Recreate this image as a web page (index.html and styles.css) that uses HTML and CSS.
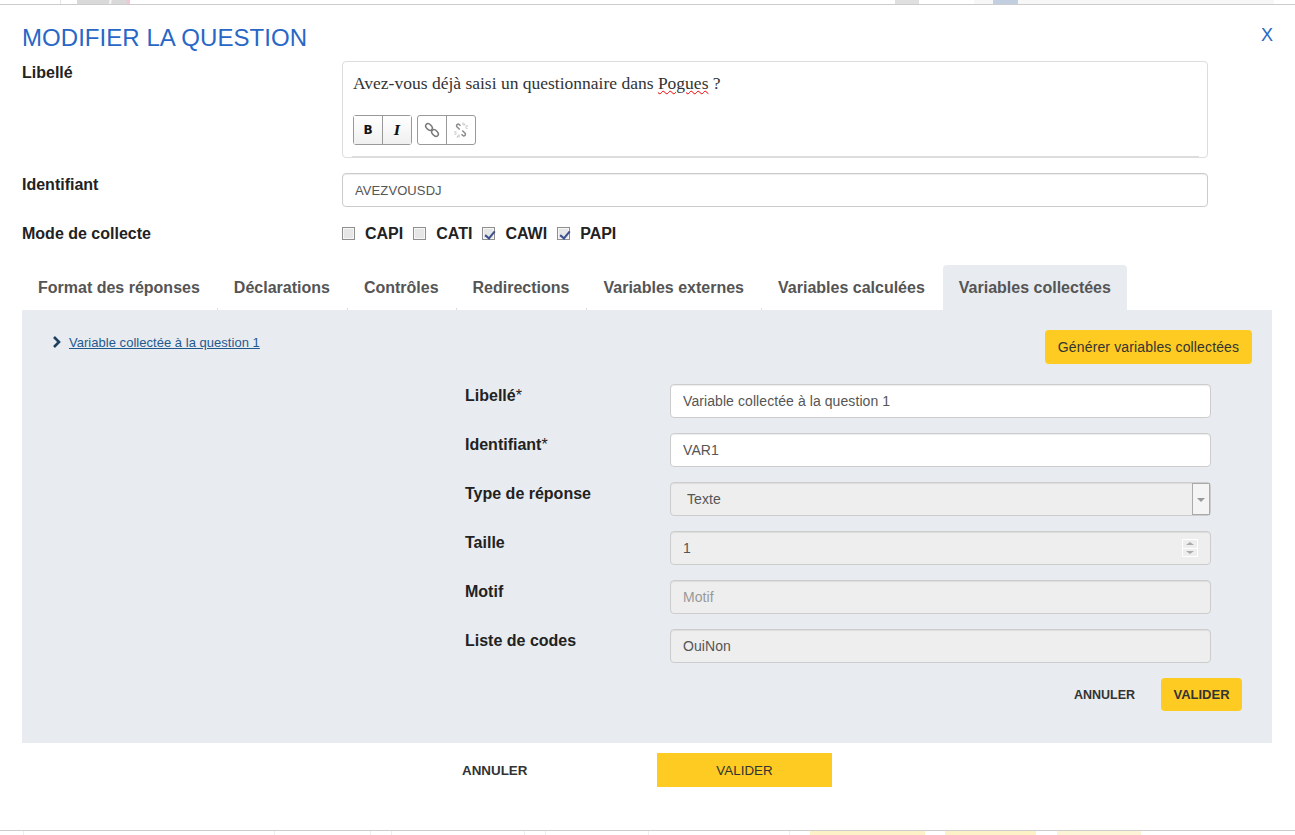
FILE: index.html
```html
<!DOCTYPE html>
<html lang="fr">
<head>
<meta charset="utf-8">
<title>Modifier la question</title>
<link rel="stylesheet" href="styles.css">
</head>
<body>
<div class="backdrop-top">
  <span class="bt-a"></span><span class="bt-b"></span><span class="bt-c"></span><span class="bt-e"><span class="bt-d"></span></span>
</div>
<main class="modal">
  <header class="modal-head">
    <h1>MODIFIER LA QUESTION</h1>
    <a class="close">X</a>
  </header>
  <div class="row row-label">
    <label class="row-title">Libellé</label>
    <div class="editor">
      <p class="editor-text">Avez-vous déjà saisi un questionnaire dans <span class="spell">Pogues</span> ?</p>
      <div class="toolbar">
        <div class="btn-group">
          <span class="tool tool-b">B</span><span class="tool tool-i">I</span>
        </div>
        <div class="btn-group">
          <span class="tool"><svg width="18" height="18" viewBox="0 0 18 18" fill="none" stroke="#777" stroke-width="1.5"><ellipse cx="6" cy="6" rx="3.800" ry="2.600" transform="rotate(45 6 6)"/><ellipse cx="12" cy="12" rx="3.800" ry="2.600" transform="rotate(45 12 12)"/></svg></span><span class="tool"><svg width="18" height="18" viewBox="0 0 18 18" fill="none" stroke="#888" stroke-width="1.400"><path d="M8.500 4.800L7.200 3.500c-1.300-1.300-3.600.9-2.300 2.200l2.800 2.800"/><path d="M9.500 13.200l1.300 1.300c1.300 1.300 3.600-.9 2.300-2.200l-2.800-2.800"/><path d="M11 1.500v2.500M13 2.500l-1.200 2M16 5h-2.500M15.500 7.500l-2-.8M2 11h2.500M2.500 13.500l2-.8M5 16.500l1-2M7 13.500v3" stroke="#bbb" stroke-width="1"/></svg></span>
        </div>
      </div>
      <div class="editor-rule"></div>
    </div>
  </div>
  <div class="row row-ident">
    <label class="row-title">Identifiant</label>
    <input class="field field-wide" value="AVEZVOUSDJ">
  </div>
  <div class="row row-mode">
    <label class="row-title">Mode de collecte</label>
    <div class="modes">
      <label class="mode"><input class="check" type="checkbox"><span>CAPI</span></label>
      <label class="mode"><input class="check" type="checkbox"><span>CATI</span></label>
      <label class="mode"><input class="check" type="checkbox" checked><span>CAWI</span></label>
      <label class="mode"><input class="check" type="checkbox" checked><span>PAPI</span></label>
    </div>
  </div>
  <nav class="tabs">
    <a class="tab">Format des réponses</a>
    <a class="tab">Déclarations</a>
    <a class="tab">Contrôles</a>
    <a class="tab">Redirections</a>
    <a class="tab">Variables externes</a>
    <a class="tab tab-plain">Variables calculées</a>
    <a class="tab tab-active">Variables collectées</a>
  </nav>
  <section class="panel">
    <div class="panel-top">
      <a class="tree-link"><svg class="chev" width="10" height="12" viewBox="0 0 10 12"><path d="M2 1l5 5-5 5" fill="none" stroke="#1f3f5f" stroke-width="2.600"/></svg><span>Variable collectée à la question 1</span></a>
      <button class="btn-yellow btn-generate">Générer variables collectées</button>
    </div>
    <form class="var-form">
      <div class="var-row"><label>Libellé<span class="star">*</span></label><input class="field" value="Variable collectée à la question 1"></div>
      <div class="var-row"><label>Identifiant<span class="star">*</span></label><input class="field" value="VAR1"></div>
      <div class="var-row"><label>Type de réponse</label><div class="field field-off select">Texte<span class="select-arrow"></span></div></div>
      <div class="var-row"><label>Taille</label><div class="field field-off spin">1<span class="spinner"><i class="up"></i><i class="down"></i></span></div></div>
      <div class="var-row"><label>Motif</label><div class="field field-off ph">Motif</div></div>
      <div class="var-row"><label>Liste de codes</label><div class="field field-off">OuiNon</div></div>
    </form>
    <div class="panel-actions">
      <a class="cancel">ANNULER</a>
      <button class="btn-yellow btn-ok">VALIDER</button>
    </div>
  </section>
  <div class="foot-actions">
    <a class="cancel foot-cancel">ANNULER</a>
    <button class="btn-foot">VALIDER</button>
  </div>
</main>
<div class="backdrop-bottom">
  <span class="bb-a"></span><span class="bb-b"></span><span class="bb-c"></span>
</div>
</body>
</html>
```
FILE: styles.css
```css
* { box-sizing: border-box; }
html, body { margin: 0; padding: 0; }
body { width: 1295px; height: 835px; overflow: hidden; background: #fff; font-family: "Liberation Sans", Arial, sans-serif; color: #333; display: flex; flex-direction: column; position: relative; }
.backdrop-top { height: 5px; flex: none; border-bottom: 1px solid #ccc; display: flex; background: #fff; }
.bt-a { width: 1px; height: 4px; margin-left: 60px; background: #e4e4e4; }
.bt-b { width: 53px; height: 4px; margin-left: 16px; background: linear-gradient(100deg, #d9d9d9 60%, #fff 62%, #d9d9d9 66%, #d9d9d9 92%, #f3c6d4 94%); }
.bt-c { width: 24px; height: 4px; margin-left: 765px; background: #e0e0e0; }
.bt-e { width: 300px; height: 4px; margin-left: 55px; padding-left: 19px; background: #f7f7f7; display: flex; }
.bt-d { width: 25px; height: 4px; background: #c2cfe0; }
.modal { flex: none; height: 825px; padding: 0 23px 0 22px; display: flex; flex-direction: column; background: #fff; }
.modal-head { height: 50px; display: flex; justify-content: space-between; align-items: flex-start; padding-top: 18px; }
.modal-head h1 { margin: 0; font-size: 24px; line-height: 29px; font-weight: 400; color: #2867c6; letter-spacing: .05px; }
.close { font-size: 18px; line-height: 24px; color: #2867c6; margin-right: -1px; }
.row { display: flex; }
.row-title { width: 320px; flex: none; font-size: 16px; font-weight: 700; color: #222; line-height: 20px; }
.row-label { height: 96px; margin-top: 6px; }
.row-label .row-title { padding-top: 2px; }
.editor { width: 866px; height: 97px; border: 1px solid #ddd; border-radius: 4px; padding: 0 10px; position: relative; }
.editor-text { margin: 0; padding-top: 11px; font-family: "Liberation Serif", serif; font-size: 17.5px; line-height: 20px; color: #333; }
.spell { text-decoration: underline wavy #e00; text-decoration-thickness: 1px; }
.toolbar { display: flex; gap: 5px; margin-top: 22px; }
.btn-group { display: flex; width: 59px; border: 1px solid #999; border-radius: 3px; height: 30px; background: #fff; }
.tool { flex: 1; display: flex; align-items: center; justify-content: center; font-size: 13px; font-weight: 700; color: #111; }
.tool + .tool { border-left: 1px solid #999; }
.tool-b, .tool-i { background: linear-gradient(#fff, #f0f0f0); }
.tool-b { font-family: "DejaVu Sans", sans-serif; font-size: 12px; }
.tool-i { font-family: "DejaVu Serif", serif; font-style: italic; font-size: 13px; }
.editor-rule { position: absolute; left: 9px; right: 8px; bottom: 0; height: 1px; background: #ddd; }
.row-ident { height: 34px; margin-top: 16px; }
.row-ident .row-title { padding-top: 2px; }
.field { display: block; height: 34px; width: 541px; border: 1px solid #ccc; border-radius: 4px; padding: 0 12px; font: 14px/32px "Liberation Sans", Arial, sans-serif; letter-spacing: .08px; color: #555; background: #fff; box-shadow: inset 0 1px 1px rgba(0,0,0,.075); outline: none; }
.field-wide { width: 866px; font-size: 13px; letter-spacing: .1px; }
.row-mode { height: 20px; margin-top: 17px; align-items: center; }
.modes { display: flex; }
.mode { display: flex; align-items: center; font-size: 16px; font-weight: 700; color: #222; margin-right: 10px; }
.check { appearance: none; position: relative; width: 13px; height: 13px; margin: 0 10px 2px 0; border: 1px solid #8f8f8f; background: #e6e6e6; box-shadow: inset 0 0 0 1px #f6f6f6; }
.check:checked::after { content: ""; position: absolute; left: 4px; top: 1px; width: 4px; height: 8px; border: solid #3d4f8f; border-width: 0 2px 2px 0; transform: rotate(40deg); }
.tabs { display: flex; height: 45px; margin-top: 21px; width: 1250px; }
.tab { padding: 13px 18px 0 16px; font-size: 16px; font-weight: 700; line-height: 20px; color: #555; border-radius: 4px 4px 0 0; white-space: nowrap; background: linear-gradient(#ddd, #ddd) right bottom / 1px 2px no-repeat; }
.tab-plain { background: none; }
.tab-active { padding-right: 16px; background: #e8ebf0; }
.panel { width: 1250px; height: 433px; background: #e8ebf0; padding: 20px 20px 0 30px; display: flex; flex-direction: column; }
.panel-top { display: flex; justify-content: space-between; align-items: flex-start; height: 55px; margin-bottom: -1px; }
.tree-link { display: flex; align-items: center; gap: 7px; font-size: 13px; letter-spacing: .03px; color: #1f5a8f; height: 24px; }
.tree-link span { text-decoration: underline; }
.chev { flex: none; }
.btn-yellow { border: 0; border-radius: 4px; background: #fdcb21; color: #333; font: 14px "Liberation Sans", Arial, sans-serif; letter-spacing: .14px; }
.btn-generate { width: 207px; height: 34px; }
.var-form { display: flex; flex-direction: column; gap: 15px; }
.var-row { display: flex; height: 34px; padding-left: 413px; }
.var-row label { width: 205px; flex: none; padding-top: 2px; font-size: 16px; font-weight: 700; color: #222; line-height: 20px; }
.star { font-weight: 400; }
.field-off { background: #eee; position: relative; }
.select { padding-left: 16px; }
.ph { color: #999; }
.select-arrow { position: absolute; right: 0; top: 0; bottom: 0; width: 18px; background: #f4f4f4; border: 1px solid #aaa; }
.select-arrow::after { content: ""; position: absolute; left: 4px; top: 14px; border: 4px solid transparent; border-top: 4px solid #999; border-bottom: 0; }
.spinner { position: absolute; right: 12px; top: 7px; width: 16px; height: 18px; background: #fff; display: flex; flex-direction: column; gap: 1px; padding: 1px; }
.spinner i { flex: 1; background: #eee; position: relative; }
.up::after, .down::after { content: ""; position: absolute; left: 3px; top: 2px; border: 4px solid transparent; border-top: 0; border-bottom: 3px solid #aaa; }
.down::after { border-bottom: 0; border-top: 3px solid #aaa; }
.panel-actions { display: flex; justify-content: flex-end; align-items: center; gap: 26px; margin-top: 15px; padding-right: 10px; }
.cancel { font-size: 12.5px; font-weight: 700; color: #333; }
.btn-ok { width: 81px; height: 33px; font-size: 13px; font-weight: 700; letter-spacing: 0; }
.foot-actions { display: flex; align-items: center; height: 34px; margin-top: 10px; padding-left: 440px; }
.foot-cancel { width: 195px; font-size: 13.4px; }
.btn-foot { width: 175px; height: 34px; border: 0; background: #fdcb21; color: #333; font: 13.4px "Liberation Sans", Arial, sans-serif; }
.backdrop-bottom { position: absolute; left: 0; top: 830px; width: 1295px; height: 5px; border-top: 1px solid #ccc; display: flex; background-repeat: no-repeat; background-size: 1px 4px; background-image: linear-gradient(#eee,#eee), linear-gradient(#eee,#eee), linear-gradient(#eee,#eee), linear-gradient(#eee,#eee), linear-gradient(#eee,#eee), linear-gradient(#eee,#eee), linear-gradient(#eee,#eee), linear-gradient(#eee,#eee); background-position: 23px 0, 274px 0, 370px 0, 391px 0, 524px 0, 545px 0, 648px 0, 789px 0; }
.bb-a { width: 115px; height: 4px; margin-left: 810px; background: #fdf1c8; }
.bb-b { width: 91px; height: 4px; margin-left: 20px; background: #fdf1c8; }
.bb-c { width: 84px; height: 4px; margin-left: 21px; background: #fdf4d8; }
```
